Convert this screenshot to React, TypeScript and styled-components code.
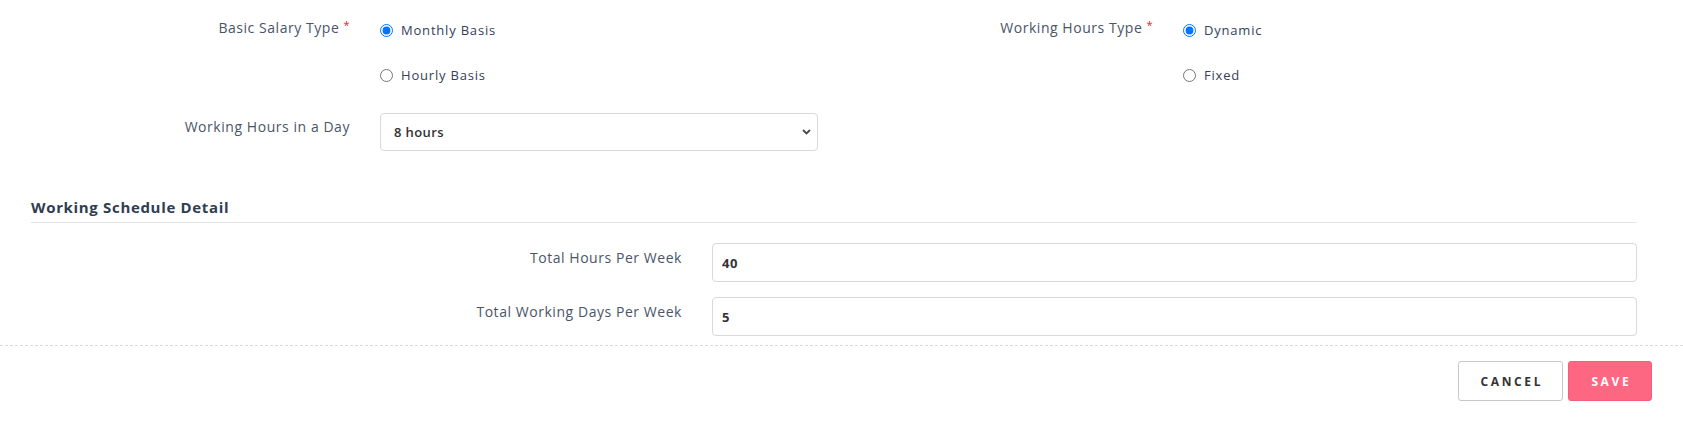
import React from "react";
import styled, { createGlobalStyle } from "styled-components";

const Global = createGlobalStyle`
  html, body { margin: 0; padding: 0; background: #fff; }
  body { font-family: "Open Sans", "Liberation Sans", sans-serif; -webkit-font-smoothing: antialiased; }
  * { box-sizing: border-box; }
`;

const Page = styled.div`
  width: 1683px;
  height: 435px;
  display: flex;
  flex-direction: column;
  background: #fff;
`;

const Content = styled.div`
  padding: 18px 46px 0 31px;
  display: flex;
  flex-direction: column;
`;

const TopGrid = styled.div`
  display: grid;
  grid-template-columns: 803px 803px;
`;

const Half = styled.div`
  display: flex;
  flex-direction: column;
  gap: 28px;
`;

const FieldRow = styled.div<{ $labelWidth: number }>`
  display: grid;
  grid-template-columns: ${(p) => p.$labelWidth}px 1fr;
  column-gap: 30px;
  align-items: start;
`;

const Label = styled.label<{ $pad?: number }>`
  text-align: right;
  font-size: 14px;
  line-height: 20px;
  color: #4a5568;
  letter-spacing: 0.55px;
  padding-top: ${(p) => p.$pad ?? 0}px;
`;

const Required = styled.span`
  color: #e11d2a;
  font-size: 11px;
  vertical-align: top;
  margin-left: 4px;
  position: relative;
  top: -3px;
`;

const RadioGroup = styled.div`
  display: flex;
  flex-direction: column;
  gap: 25px;
  padding-top: 2px;
`;

const RadioOption = styled.label`
  display: flex;
  align-items: center;
  gap: 8px;
  height: 20px;
  font-size: 13px;
  color: #34405a;
  letter-spacing: 0.8px;
  cursor: pointer;
`;

const Radio = styled.input`
  margin: 0;
  width: 13px;
  height: 13px;
`;

const SelectWrap = styled.div`
  position: relative;
  width: 438px;
  height: 38px;
`;

const Select = styled.select`
  appearance: none;
  width: 100%;
  height: 100%;
  border: 1px solid #d9d9d9;
  border-radius: 4px;
  background: #fff;
  padding: 0 28px 0 13px;
  font-family: "Open Sans", "Liberation Sans", sans-serif;
  font-size: 13px;
  font-weight: 600;
  color: #333;
  letter-spacing: 0.4px;
  outline: none;
`;

const Chevron = styled.svg`
  position: absolute;
  right: 7px;
  top: 16px;
  width: 9px;
  height: 6px;
  pointer-events: none;
`;

const SectionTitle = styled.h3`
  margin: 46px 0 0;
  padding-bottom: 5px;
  border-bottom: 1px solid #e2e4e8;
  font-size: 15px;
  line-height: 20px;
  font-weight: 700;
  color: #2f3d52;
  letter-spacing: 0.67px;
`;

const Fields = styled.div`
  margin-top: 20px;
  display: flex;
  flex-direction: column;
  gap: 15px;
`;

const TextInput = styled.input`
  width: 100%;
  height: 39px;
  border: 1px solid #d9d9d9;
  border-radius: 4px;
  padding: 0 9px;
  font-family: "Open Sans", "Liberation Sans", sans-serif;
  font-size: 13px;
  font-weight: 700;
  color: #333;
  letter-spacing: 0.6px;
  outline: none;
`;

const Footer = styled.div`
  margin-top: 9px;
  border-top: 1px dashed #dcdcdc;
  padding: 15px 31px 0 0;
  display: flex;
  justify-content: flex-end;
  gap: 5px;
`;

const Button = styled.button<{ $primary?: boolean }>`
  height: 40px;
  width: ${(p) => (p.$primary ? 84 : 105)}px;
  border-radius: 3px;
  border: 1px solid ${(p) => (p.$primary ? "#f75d78" : "#c8c8c8")};
  background: ${(p) => (p.$primary ? "#fe6781" : "#fff")};
  color: ${(p) => (p.$primary ? "#fff" : "#333")};
  font-family: "Open Sans", "Liberation Sans", sans-serif;
  font-size: 12px;
  font-weight: 700;
  letter-spacing: 2.6px;
  padding: 0 0 0 2.6px;
  cursor: pointer;
`;

export default function App() {
  return (
    <Page>
      <Global />
      <Content>
        <TopGrid>
          <Half>
            <FieldRow $labelWidth={319}>
              <Label>
                Basic Salary Type<Required>*</Required>
              </Label>
              <RadioGroup>
                <RadioOption>
                  <Radio type="radio" name="salary" defaultChecked />
                  Monthly Basis
                </RadioOption>
                <RadioOption>
                  <Radio type="radio" name="salary" />
                  Hourly Basis
                </RadioOption>
              </RadioGroup>
            </FieldRow>
            <FieldRow $labelWidth={319}>
              <Label $pad={4}>Working Hours in a Day</Label>
              <SelectWrap>
                <Select defaultValue="8">
                  <option value="8">8 hours</option>
                </Select>
                <Chevron viewBox="0 0 9 6">
                  <path d="M1 1l3.5 3.5L8 1" fill="none" stroke="#4a4a4a" strokeWidth="1.8" />
                </Chevron>
              </SelectWrap>
            </FieldRow>
          </Half>
          <Half>
            <FieldRow $labelWidth={319}>
              <Label>
                Working Hours Type<Required>*</Required>
              </Label>
              <RadioGroup>
                <RadioOption>
                  <Radio type="radio" name="hours" defaultChecked />
                  Dynamic
                </RadioOption>
                <RadioOption>
                  <Radio type="radio" name="hours" />
                  Fixed
                </RadioOption>
              </RadioGroup>
            </FieldRow>
          </Half>
        </TopGrid>
        <SectionTitle>Working Schedule Detail</SectionTitle>
        <Fields>
          <FieldRow $labelWidth={651}>
            <Label $pad={5}>Total Hours Per Week</Label>
            <TextInput defaultValue="40" />
          </FieldRow>
          <FieldRow $labelWidth={651}>
            <Label $pad={5}>Total Working Days Per Week</Label>
            <TextInput defaultValue="5" />
          </FieldRow>
        </Fields>
      </Content>
      <Footer>
        <Button type="button">CANCEL</Button>
        <Button type="button" $primary>
          SAVE
        </Button>
      </Footer>
    </Page>
  );
}
